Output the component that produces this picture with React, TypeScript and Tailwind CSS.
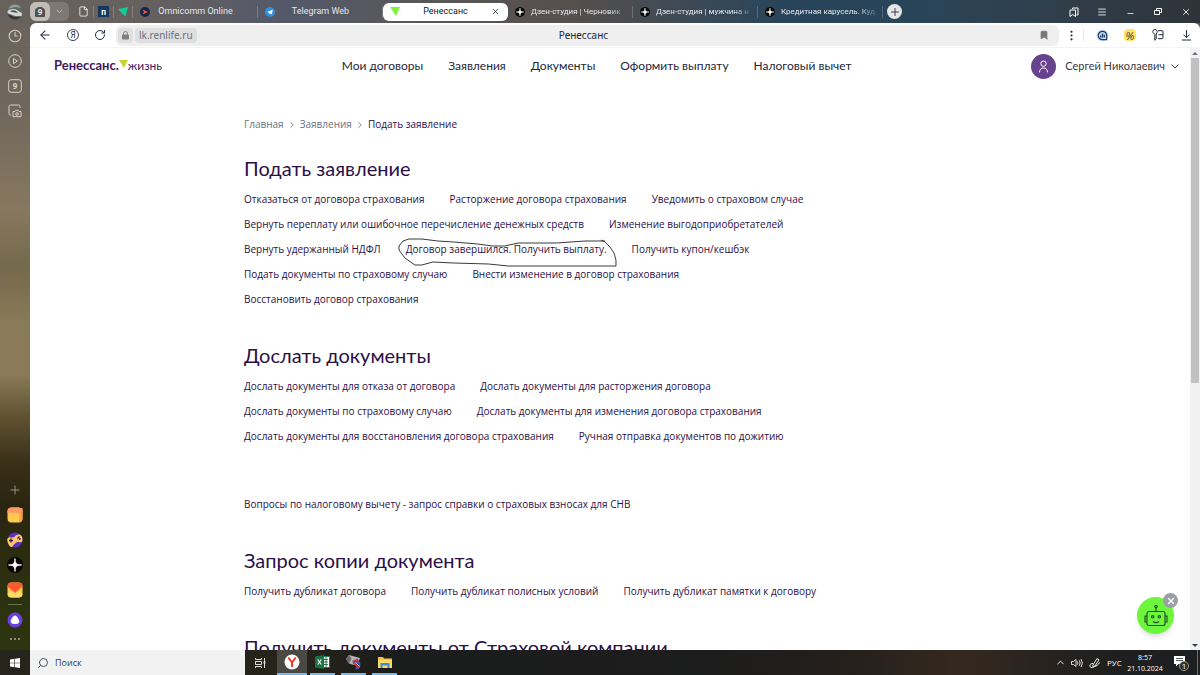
import type { ReactNode } from "react";
import {
  ArrowLeft,
  Bookmark,
  ChevronDown,
  ChevronRight,
  ChevronUp,
  Clock3,
  EllipsisVertical,
  File,
  Menu,
  Minus,
  Plus,
  RotateCw,
  Search,
  X,
} from "lucide-react";

interface TabData {
  title: string;
  icon: ReactNode;
  centered?: boolean;
  active?: boolean;
}

const tabs: TabData[] = [
  { title: "Omnicomm Online", icon: <OmnicommIcon />, centered: true },
  { title: "Telegram Web", icon: <TelegramIcon />, centered: true },
  { title: "Ренессанс", icon: <RenIcon />, centered: true, active: true },
  { title: "Дзен-студия | Черновик", icon: <DzenIcon size={10} /> },
  { title: "Дзен-студия | мужчина н", icon: <DzenIcon size={10} /> },
  { title: "Кредитная карусель. Куд", icon: <DzenIcon size={10} /> },
];

const menu = ["Мои договоры", "Заявления", "Документы", "Оформить выплату", "Налоговый вычет"];

const circled = "Договор завершился. Получить выплату.";

const applications = [
  "Отказаться от договора страхования",
  "Расторжение договора страхования",
  "Уведомить о страховом случае",
  "Вернуть переплату или ошибочное перечисление денежных средств",
  "Изменение выгодоприобретателей",
  "Вернуть удержанный НДФЛ",
  circled,
  "Получить купон/кешбэк",
  "Подать документы по страховому случаю",
  "Внести изменение в договор страхования",
  "Восстановить договор страхования",
];

const additional = [
  "Дослать документы для отказа от договора",
  "Дослать документы для расторжения договора",
  "Дослать документы по страховому случаю",
  "Дослать документы для изменения договора страхования",
  "Дослать документы для восстановления договора страхования",
  "Ручная отправка документов по дожитию",
];

const copies = [
  "Получить дубликат договора",
  "Получить дубликат полисных условий",
  "Получить дубликат памятки к договору",
];

export default function App() {
  return (
    <div className="flex h-screen flex-col overflow-hidden bg-white font-['Noto_Sans',sans-serif]">
      <TabStrip />
      <div className="flex min-h-0 flex-1">
        <SideBar />
        <div className="flex min-w-0 flex-1 flex-col bg-[#55565c]">
          <AddressBar />
          <div className="flex min-h-0 flex-1 bg-white">
            <Page />
            <ScrollBar />
          </div>
        </div>
      </div>
      <TaskBar />
    </div>
  );
}

function TabStrip() {
  return (
    <header className="flex h-[23px] shrink-0 items-center bg-[linear-gradient(90deg,#68615c_0%,#66615f_12%,#53586a_24%,#5a5757_36%,#554f4d_48%,#3d4a55_57%,#27445b_66%,#2b4457_78%,#303d48_90%,#2d3339_100%)] text-gray-200">
      <div className="flex w-[30px] shrink-0 justify-center">
        <CarAvatar />
      </div>
      <div className="flex h-[19px] w-[39px] shrink-0 rounded-md bg-white/15">
        <button aria-label="Группа вкладок" className="flex w-5 items-center justify-center rounded-md bg-[#c0bcb8]">
          <svg width="12" height="12" viewBox="0 0 12 12">
            <path d="M1 3.500 3 2l1-1h4l1 1 2 1.500V10a1 1 0 0 1-1 1H2a1 1 0 0 1-1-1z" fill="#55504c" />
            <text x="6" y="9" textAnchor="middle" fontSize="8" fontWeight="700" fill="#e8e4e0">9</text>
          </svg>
        </button>
        <button aria-label="Список вкладок" className="flex flex-1 items-center justify-center">
          <ChevronDown size={9} className="text-gray-300" />
        </button>
      </div>
      <div className="ml-1 flex shrink-0 items-center">
        <span className="flex w-5 justify-center">
          <File size={11} strokeWidth={1.75} className="text-white" />
        </span>
        <Divider />
        <span className="flex w-[19px] justify-center">
          <span className="flex h-[11px] w-[11px] items-center justify-center bg-[#15385c] text-[8px] leading-none font-bold text-white">
            п
          </span>
        </span>
        <Divider />
        <span className="flex w-[18px] justify-center">
          <svg width="10" height="10" viewBox="0 0 10 10">
            <path d="M0 2 10 0 7.500 9.500 4.500 7z" fill="#17c996" />
          </svg>
        </span>
        <Divider />
      </div>
      <div className="flex h-full min-w-0 max-w-[750px] flex-1 items-center" role="tablist">
        {tabs.map((tab) => (
          <Tab key={tab.title} tab={tab} />
        ))}
      </div>
      <button aria-label="Новая вкладка" className="ml-1 flex h-[15px] w-[15px] shrink-0 items-center justify-center rounded-full bg-[#e4e6e8]">
        <Plus size={12} className="text-gray-700" />
      </button>
      <div className="ml-auto flex shrink-0 items-center text-white">
        <WindowButton label="Коллекции">
          <svg width="10" height="10" viewBox="0 0 10 10" fill="none" stroke="currentColor">
            <path d="M3.500 2V1H9v7H7.500M1 3h5.500v6.500L3.800 7.500 1 9.500z" />
          </svg>
        </WindowButton>
        <WindowButton label="Меню"><Menu size={10} /></WindowButton>
        <WindowButton label="Свернуть"><Minus size={9} className="mt-1" /></WindowButton>
        <WindowButton label="Окно">
          <svg width="8" height="8" viewBox="0 0 8 8" fill="none" stroke="currentColor">
            <path d="M2.500 2.500v-2h5v4h-2M.5 2.500h5v4h-5z" />
          </svg>
        </WindowButton>
        <WindowButton label="Закрыть"><X size={10} /></WindowButton>
      </div>
    </header>
  );
}

function Tab({ tab }: { tab: TabData }) {
  const base = "flex h-[18px] min-w-0 flex-1 items-center rounded-md pl-[7px] font-['Roboto',sans-serif]";
  return (
    <div
      role="tab"
      aria-selected={!!tab.active}
      className={tab.active ? `${base} bg-white text-gray-900` : base}
    >
      <span className="flex w-[10px] shrink-0 justify-center">{tab.icon}</span>
      {tab.centered ? (
        <span className="min-w-0 flex-1 text-center text-[9px] whitespace-nowrap">{tab.title}</span>
      ) : (
        <span className="ml-1.5 min-w-0 flex-1 text-[8px] whitespace-nowrap [mask-image:linear-gradient(90deg,#000_80%,transparent)]">
          {tab.title}
        </span>
      )}
      {tab.active ? (
        <button aria-label="Закрыть вкладку" className="w-[17px] shrink-0">
          <X size={9} />
        </button>
      ) : (
        <span className={tab.centered ? "flex w-[17px] shrink-0 justify-end" : "flex w-1 shrink-0 justify-end"}>
          <Divider />
        </span>
      )}
    </div>
  );
}

function Divider() {
  return <span className="h-3 w-px shrink-0 bg-white/20" />;
}

function WindowButton({ label, children }: { label: string; children: ReactNode }) {
  return (
    <button aria-label={label} className="flex h-[22px] w-[28px] items-center justify-center">
      {children}
    </button>
  );
}

function SideBar() {
  return (
    <aside className="flex w-[30px] shrink-0 flex-col items-center bg-[linear-gradient(180deg,#6a635b_0%,#71685c_14%,#87785f_30%,#74694b_39%,#8a7b58_48%,#8a7a58_56%,#5f5130_63%,#3a3018_70%,#29250f_77%,#2c3010_88%,#2b350e_100%)] text-[#d8d2ca]">
      <SideButton label="История"><Clock3 size={14} strokeWidth={1.75} /></SideButton>
      <SideButton label="Видео">
        <svg width="14" height="14" viewBox="0 0 14 14" fill="none" stroke="currentColor">
          <circle cx="7" cy="7" r="6.300" />
          <path d="M5.500 4.500v5l4-2.500z" strokeLinejoin="round" />
        </svg>
      </SideButton>
      <SideButton label="Вкладки">
        <svg width="14" height="14" viewBox="0 0 14 14">
          <rect x=".7" y=".7" width="12.600" height="12.600" rx="2.500" fill="none" stroke="currentColor" />
          <text x="7" y="10" textAnchor="middle" fontSize="8" fontWeight="700" fill="currentColor">9</text>
        </svg>
      </SideButton>
      <SideButton label="Скриншот">
        <svg width="14" height="14" viewBox="0 0 14 14" fill="none" stroke="currentColor">
          <path d="M3 11H2.500a1.500 1.500 0 0 1-1.500-1.500v-7A1.500 1.500 0 0 1 2.500 1h8A1.500 1.500 0 0 1 12 2.500V4" />
          <path d="M5 7.500h2l.8-1.200h2.400l.8 1.200h2v5.200H5z" strokeLinejoin="round" />
          <circle cx="9" cy="10" r="1.300" />
        </svg>
      </SideButton>
      <div className="mt-auto flex flex-col items-center">
        <SideButton label="Добавить"><Plus size={14} strokeWidth={1.5} className="text-[#a39f90]" /></SideButton>
        <SideButton label="Заметки">
          <svg width="16" height="16" viewBox="0 0 16 16">
            <rect x=".5" y=".5" width="15" height="15" rx="4" fill="#ffc94f" />
            <path d="M11 1h4.500v10.500a4 4 0 0 1-3.500 4c1-4 .5-9-1-14.500z" fill="#f79e4a" />
            <path d="M.5 6V4.500a4 4 0 0 1 4-4h7c2.500 0 4 1.500 4 4L12 6l-1 2V5L9 7V5L7 7.500V5L5 7V5L3 6z" fill="#ff9b62" />
          </svg>
        </SideButton>
        <SideButton label="Игры">
          <svg width="16" height="16" viewBox="0 0 16 16">
            <circle cx="8" cy="8" r="7.500" fill="#5b2fc0" />
            <path d="M.5 6.500C2 4.500 4 6 6 5.500S9 2 12 2.500s3.500 3 3.500 5.500-2 2.500-3.500 2-2 .5-4 1.500-2 4-4 3.500S-.5 9 .5 6.500z" fill="#ffc765" />
            <path d="M2 8.500h4M4 6.500v4M10.500 6.500l2-2" stroke="#2d1b50" strokeWidth="1.300" />
            <circle cx="12.800" cy="7" r=".9" fill="#2d1b50" />
          </svg>
        </SideButton>
        <SideButton label="Дзен"><DzenIcon size={16} /></SideButton>
        <SideButton label="Почта">
          <svg width="16" height="16" viewBox="0 0 16 16">
            <rect x=".5" y=".5" width="15" height="15" rx="4" fill="#ffc84e" />
            <path d="M.5 12 8 8l7.500 4a4 4 0 0 1-4 3.500h-7a4 4 0 0 1-4-3.500z" fill="#ffdc63" />
            <path d="M.5 4.500a4 4 0 0 1 4-4h7a4 4 0 0 1 4 4L8 11z" fill="#ff5a30" />
          </svg>
        </SideButton>
        <span className="my-0.5 h-px w-[14px] bg-white/30" />
        <SideButton label="Алиса">
          <svg width="16" height="16" viewBox="0 0 16 16">
            <circle cx="8" cy="8" r="7.500" fill="#6a3fe0" />
            <path d="M8 3.500c1.800 0 4.700 4.800 4.300 6.500S9.500 12 8 12s-3.900-.3-4.300-2S6.200 3.500 8 3.500z" fill="#fff" />
          </svg>
        </SideButton>
        <button aria-label="Ещё" className="flex h-[18px] items-center gap-[2px] pb-1">
          <span className="h-[2px] w-[2px] rounded-full bg-[#b0ab98]" />
          <span className="h-[2px] w-[2px] rounded-full bg-[#b0ab98]" />
          <span className="h-[2px] w-[2px] rounded-full bg-[#b0ab98]" />
        </button>
      </div>
    </aside>
  );
}

function SideButton({ label, children }: { label: string; children: ReactNode }) {
  return (
    <button aria-label={label} className="flex h-[25px] w-[30px] items-center justify-center">
      {children}
    </button>
  );
}

function AddressBar() {
  return (
    <div className="flex h-[25px] shrink-0 items-center rounded-t-md border-b border-gray-100 bg-white text-gray-800">
      <div className="flex w-[86px] shrink-0 items-center justify-between pr-2.5 pl-2">
        <button aria-label="Назад"><ArrowLeft size={14} strokeWidth={1.75} /></button>
        <button aria-label="Яндекс" className="flex h-3 w-3 items-center justify-center rounded-full border border-gray-700 text-[8px] leading-none">
          Я
        </button>
        <button aria-label="Обновить"><RotateCw size={12} strokeWidth={2} /></button>
      </div>
      <div className="flex h-[21px] min-w-0 flex-1 items-center rounded-md bg-[#efefef] pl-0.5 text-[10px]">
        <div className="flex min-w-0 flex-1 items-center gap-0.5 text-gray-500">
          <span className="flex h-[15px] w-[15px] items-center justify-center rounded bg-[#dfdfdf]">
            <svg width="7" height="9" viewBox="0 0 7 9">
              <rect y="3.500" width="7" height="5" rx="1" fill="#808080" />
              <path d="M1.500 4V2.500a2 2 0 0 1 4 0V4" fill="none" stroke="#808080" />
            </svg>
          </span>
          <span className="rounded bg-[#dfdfdf] px-1 leading-[15px]">lk.renlife.ru</span>
        </div>
        <span>Ренессанс</span>
        <div className="flex flex-1 justify-end pr-2.5">
          <Bookmark size={10} fill="#777" className="text-[#777]" />
        </div>
      </div>
      <div className="flex shrink-0 items-center">
        <button aria-label="Действия" className="flex w-6 justify-center"><EllipsisVertical size={13} /></button>
        <span className="mr-1 h-3 w-px bg-gray-200" />
        <ToolButton label="Отзывы">
          <svg width="13" height="13" viewBox="0 0 13 13">
            <circle cx="6.500" cy="6.500" r="6" fill="#c9dcf5" />
            <path d="M10.700 10.700H6.500a4.200 4.200 0 1 1 4.200-4.200z" fill="none" stroke="#203c66" strokeWidth="1.200" />
            <path d="M4.700 8.500V6.500M6.500 8.500V4.500M8.300 8.500V5.700" stroke="#203c66" strokeWidth="1.300" />
          </svg>
        </ToolButton>
        <ToolButton label="Скидки">
          <span className="flex h-3 w-3 items-center justify-center rounded-sm bg-[#ffe566] text-[11px] leading-none text-gray-700 italic">
            %
          </span>
        </ToolButton>
        <ToolButton label="Пароли">
          <svg width="12" height="12" viewBox="0 0 12 12" fill="none" stroke="currentColor">
            <path d="M1 3.500C.3 1.500 1.500.6 3 .6s2.700 1 2 2.900L4.200 5v5L2.800 11.300V5.300z" strokeLinejoin="round" />
            <path d="M6 1.700h4a1 1 0 0 1 1 1v6a1 1 0 0 1-1 1H6M6.500 5.700H11" />
          </svg>
        </ToolButton>
        <ToolButton label="Загрузки">
          <svg width="11" height="12" viewBox="0 0 11 12" fill="none" stroke="currentColor">
            <path d="M5.500 1v7.500M2.500 5.700l3 3 3-3M1 11h9" />
          </svg>
        </ToolButton>
      </div>
    </div>
  );
}

function ToolButton({ label, children }: { label: string; children: ReactNode }) {
  return (
    <button aria-label={label} className="flex w-[28px] items-center justify-center">
      {children}
    </button>
  );
}

function Page() {
  return (
    <div className="relative min-w-0 flex-1 overflow-hidden font-['Lato',sans-serif] text-[#2b1048]">
      <div className="flex h-9 items-center justify-between pr-[11px] pl-6">
        <a href="#" className="flex items-center text-[#3d1a5e]">
          <span className="text-[13px] font-bold">Ренессанс.</span>
          <svg width="9" height="8" viewBox="0 0 9 8" className="mb-1">
            <path d="M0 0h9L5 8z" fill="#c8d530" />
          </svg>
          <span className="text-[12px]">жизнь</span>
        </a>
        <nav className="flex gap-[25px] text-[12px] text-[#25263a]">
          {menu.map((item) => (
            <a key={item} href="#">{item}</a>
          ))}
        </nav>
        <button className="flex items-center text-[11px] text-[#3c3a44]">
          <span className="mr-[9px] flex h-[25px] w-[25px] items-center justify-center rounded-full bg-[#67428f]">
            <svg width="11" height="13" viewBox="0 0 11 13" fill="none" stroke="#fff">
              <circle cx="5.500" cy="3.700" r="2.700" />
              <path d="M1.500 12c0-2.500 1.700-4 4-4s4 1.500 4 4" strokeLinecap="round" />
            </svg>
          </span>
          Сергей Николаевич
          <svg width="8" height="5" viewBox="0 0 8 5" fill="none" stroke="currentColor" className="ml-1.5">
            <path d="m.5.5 3.500 3.500L7.500.5" />
          </svg>
        </button>
      </div>

      <main className="mx-auto max-w-[732px] pt-7">
        <div className="flex h-[25px] items-center gap-[3px] font-['Open_Sans',sans-serif] text-[10px]">
          <a href="#" className="text-gray-500">Главная</a>
          <ChevronRight size={10} className="text-gray-500" />
          <a href="#" className="text-gray-500">Заявления</a>
          <ChevronRight size={10} className="text-gray-500" />
          <span>Подать заявление</span>
        </div>
        <div className="mt-4 flex flex-col gap-7">
          <Section title="Подать заявление" links={applications} />
          <div>
            <Section title="Дослать документы" links={additional} />
            <a href="#" className="mt-[43px] block font-['Open_Sans',sans-serif] text-[10px] leading-[25px]">
              Вопросы по налоговому вычету - запрос справки о страховых взносах для СНВ
            </a>
          </div>
          <Section title="Запрос копии документа" links={copies} />
          <Section title="Получить документы от Страховой компании" links={[]} />
        </div>
      </main>

      <div className="absolute right-4 bottom-4 h-[37px] w-[37px]">
        <button aria-label="Чат-бот" className="flex h-full w-full items-center justify-center rounded-full bg-[#6ef63c] shadow-md">
          <svg width="24" height="24" viewBox="0 0 24 24" fill="none" stroke="#24522a" strokeWidth="1.200">
            <rect x="3" y="7.500" width="18" height="14" rx="2" />
            <path d="M3 12H1v6h2M21 12h2v6h-2M12 7.500V4M9 17.500c1.500 1.500 4.500 1.500 6 0" />
            <circle cx="12" cy="2.500" r="1.200" />
            <circle cx="8.700" cy="12.800" r="1.200" />
            <circle cx="15.300" cy="12.800" r="1.200" />
          </svg>
        </button>
        <button aria-label="Скрыть чат" className="absolute -top-1 -right-1 flex h-[15px] w-[15px] items-center justify-center rounded-full bg-[#9a9fa8] text-white">
          <X size={10} strokeWidth={3} />
        </button>
      </div>
    </div>
  );
}

function Section({ title, links }: { title: string; links: string[] }) {
  return (
    <section>
      <h2 className="text-[20px] leading-[30px]">{title}</h2>
      <ul className="mt-1 flex max-w-[620px] flex-wrap gap-x-[25px] font-['Open_Sans',sans-serif] text-[10px] leading-[25px]">
        {links.map((link) => (
          <li key={link} className="relative">
            <a href="#">{link}</a>
            {link === circled && <PenCircle />}
          </li>
        ))}
      </ul>
    </section>
  );
}

// hand-drawn loop around a link
function PenCircle() {
  return (
    <svg
      viewBox="0 0 222 30"
      preserveAspectRatio="none"
      className="pointer-events-none absolute top-0 -left-2 h-[30px] w-[calc(100%+20px)]"
      fill="none"
      stroke="#222"
      strokeWidth=".9"
    >
      <path d="M208 4H188L159 6H121L107 9H95L80 7 56 5 40 4 24 2H11L5 4 1 9V13L7 21 17 28H24L35 25 56 26 91 27 111 29H219V23L217 16 213 10 208 5 204 3" />
    </svg>
  );
}

function ScrollBar() {
  return (
    <div className="flex w-[10px] shrink-0 flex-col items-center bg-[#f1f1f1]">
      <span className="flex h-[10px] items-center">
        <span className="border-x-[3px] border-b-[3px] border-x-transparent border-b-gray-500" />
      </span>
      <span className="h-[54%] w-2 bg-[#c1c1c1]" />
      <span className="mt-auto flex h-[10px] items-center">
        <span className="border-x-[3px] border-t-[3px] border-x-transparent border-t-gray-700" />
      </span>
    </div>
  );
}

function TaskBar() {
  return (
    <footer className="flex h-[25px] shrink-0 bg-[linear-gradient(90deg,#26241c_0%,#25231a_25%,#1b1c1c_33%,#1d1d1d_60%,#241f1b_70%,#35291f_80%,#28231f_87%,#1e1f20_93%,#1e1f20_100%)] font-['Open_Sans',sans-serif] text-white">
      <button aria-label="Пуск" className="flex w-[30px] items-center justify-center">
        <svg width="10" height="10" viewBox="0 0 10 10" fill="#fff">
          <path d="M0 1.400 4.400.8v3.900H0zM5 .7 10 0v4.700H5zM0 5.300h4.400v3.900L0 8.600zM5 5.300h5V10l-5-.7z" />
        </svg>
      </button>
      <label className="flex w-[215px] items-center gap-1.5 bg-[#f2f2f2] pl-[7px] text-gray-700">
        <Search size={12} strokeWidth={1.75} className="-scale-x-100" />
        <input type="text" aria-label="Поиск" placeholder="Поиск" className="min-w-0 flex-1 bg-transparent text-[9px] outline-none placeholder:text-gray-700" />
      </label>
      <button aria-label="Представление задач" className="flex w-[30px] items-center justify-center">
        <svg width="11" height="10" viewBox="0 0 11 10" fill="none" stroke="#ddd">
          <path d="M.5 0v1.500h6V0M.5 3.500h6v3h-6zM.5 10V8.500h6V10M9.500 0v10" />
          <path d="M8.500 4.500h2" strokeWidth="2" />
        </svg>
      </button>
      <span className="w-0.5" />
      <TaskButton label="Яндекс Браузер" active>
        <svg width="16" height="16" viewBox="0 0 16 16">
          <circle cx="8" cy="8" r="7.500" fill="#fff" />
          <path d="M4.300 3.500 8 8.500v4.500M11.700 3.500 8 8.500" fill="none" stroke="#f0382b" strokeWidth="2" />
        </svg>
      </TaskButton>
      <TaskButton label="Excel">
        <svg width="15" height="14" viewBox="0 0 15 14">
          <rect x="7" y="1.500" width="7.500" height="11" fill="#fff" stroke="#1f7a48" />
          <path d="M9 4.500h4M9 7h4M9 9.500h4M11 2v10" stroke="#1f7a48" />
          <path d="M0 1.500 9 0v14l-9-1.500z" fill="#1a7343" />
          <path d="m2.700 4.500 3.600 5M6.300 4.500l-3.600 5" stroke="#fff" strokeWidth="1.200" />
        </svg>
      </TaskButton>
      <TaskButton label="Камера">
        <svg width="17" height="16" viewBox="0 0 17 16">
          <path d="M1 5 4 1l11 3-2 5-4 2-5-1.500z" fill="#b4b2b6" />
          <path d="M1 5 4 1l2.500 3.500L4 9.500z" fill="#68676c" />
          <path d="M7 7 12 4.500l2 2-5 4z" fill="#c83c35" />
          <path d="M8.500 9.500c2-3 6-2 6 1s-2 4-4 4" fill="none" stroke="#3157c9" strokeWidth="2" />
          <path d="m9 9 5 5" stroke="#c03a36" strokeWidth="2" />
          <path d="m10.500 8.500 4 4" stroke="#e7c449" />
        </svg>
      </TaskButton>
      <TaskButton label="Проводник">
        <svg width="14" height="12" viewBox="0 0 14 12">
          <path d="M0 1h5l1 1.500h8V12H0z" fill="#f5c33d" />
          <path d="M0 4h14v8H0z" fill="#fbd968" />
          <path d="M2.500 12V7h9v5H9.500V9.500h-5V12z" fill="#3c8fd0" />
        </svg>
      </TaskButton>
      <div className="mr-0.5 ml-auto flex items-center">
        <button aria-label="Скрытые значки" className="w-4"><ChevronUp size={11} /></button>
        <button aria-label="Звук" className="w-[18px]">
          <svg width="12" height="10" viewBox="0 0 12 10" fill="none" stroke="#eee" strokeWidth=".9">
            <path d="M.5 3.500h2l2.500-2v7l-2.500-2h-2zM6.500 3.500q1 1.500 0 3M8.200 2.200q2 2.800 0 5.600M10 1q2.800 4 0 8" />
          </svg>
        </button>
        <button aria-label="Перо" className="w-[18px]">
          <svg width="12" height="12" viewBox="0 0 12 12" fill="none" stroke="#eee">
            <path d="m4 8 4-6.500 2 1.300L6 9l-2 1zM4 6.500C1 6 0 9.500 2 10.500c2 .8 3-1.500 5-1.500s2-3 4-3.500" />
          </svg>
        </button>
        <span className="w-5 text-[8px]">РУС</span>
        <time className="w-9 text-center text-[7px] leading-[11px]">
          8:57
          <br />
          21.10.2024
        </time>
        <button aria-label="Уведомления" className="ml-2.5 w-6">
          <svg width="16" height="16" viewBox="0 0 16 16">
            <path d="M1 1h11v8H5.500L3 11.500V9H1z" fill="#fff" />
            <path d="M3 3.500h7M3 5.500h7" stroke="#333" strokeWidth=".8" />
            <circle cx="11" cy="11" r="4.600" fill="#333" stroke="#aaa" strokeWidth=".8" />
            <text x="11" y="14" textAnchor="middle" fontSize="8" fill="#fff">1</text>
          </svg>
        </button>
        <span className="h-full w-px bg-gray-500" />
      </div>
    </footer>
  );
}

function TaskButton({ label, active, children }: { label: string; active?: boolean; children: ReactNode }) {
  return (
    <button
      aria-label={label}
      className={
        active
          ? "flex w-[30px] items-center justify-center border-b-2 border-[#76b9ed] bg-[#4a4944]"
          : "mx-[3px] flex w-[25px] items-center justify-center border-b-2 border-[#76b9ed]"
      }
    >
      {children}
    </button>
  );
}

function CarAvatar() {
  return (
    <svg width="16" height="16" viewBox="0 0 16 16">
      <defs>
        <clipPath id="avatar">
          <circle cx="8" cy="8" r="7.500" />
        </clipPath>
      </defs>
      <g clipPath="url(#avatar)">
        <path d="M0 0h16v16H0z" fill="#5d6a66" />
        <path d="M0 0h16v4L8 3 0 5z" fill="#8fa0a0" />
        <path d="M0 7c3-2 7-3 10-1l6 4v3l-8-1-8-3z" fill="#d4d4d0" />
        <path d="M3 7.500c2-1.500 4-1.500 6-.5l2 2z" fill="#42484a" />
        <path d="m0 10 8 3 8-1v4H0z" fill="#38352f" />
      </g>
    </svg>
  );
}

function OmnicommIcon() {
  return (
    <svg width="10" height="10" viewBox="0 0 10 10">
      <circle cx="5" cy="5" r="5" fill="#13284b" />
      <path d="m2.500 2.500 5.500 2.500-5.500 2.500L4 5z" fill="#f0573c" />
    </svg>
  );
}

function TelegramIcon() {
  return (
    <svg width="10" height="10" viewBox="0 0 10 10">
      <circle cx="5" cy="5" r="5" fill="#3390dc" />
      <path d="m2 5 5.700-2.300-.9 4.800L5 6.200l-.9.9-.3-1.700z" fill="#fff" />
    </svg>
  );
}

function RenIcon() {
  return (
    <svg width="10" height="9" viewBox="0 0 10 9">
      <path d="M0 0h10L6 9z" fill="#79f53b" />
    </svg>
  );
}

function DzenIcon({ size }: { size: number }) {
  return (
    <svg width={size} height={size} viewBox="0 0 16 16">
      <circle cx="8" cy="8" r="8" fill="#070707" />
      <path d="M8 1.500C8.200 6.500 9.500 7.800 14.500 8 9.500 8.200 8.200 9.500 8 14.500 7.800 9.500 6.500 8.200 1.500 8 6.500 7.800 7.800 6.500 8 1.500z" fill="#fff" stroke="#fff" strokeWidth=".8" />
    </svg>
  );
}
